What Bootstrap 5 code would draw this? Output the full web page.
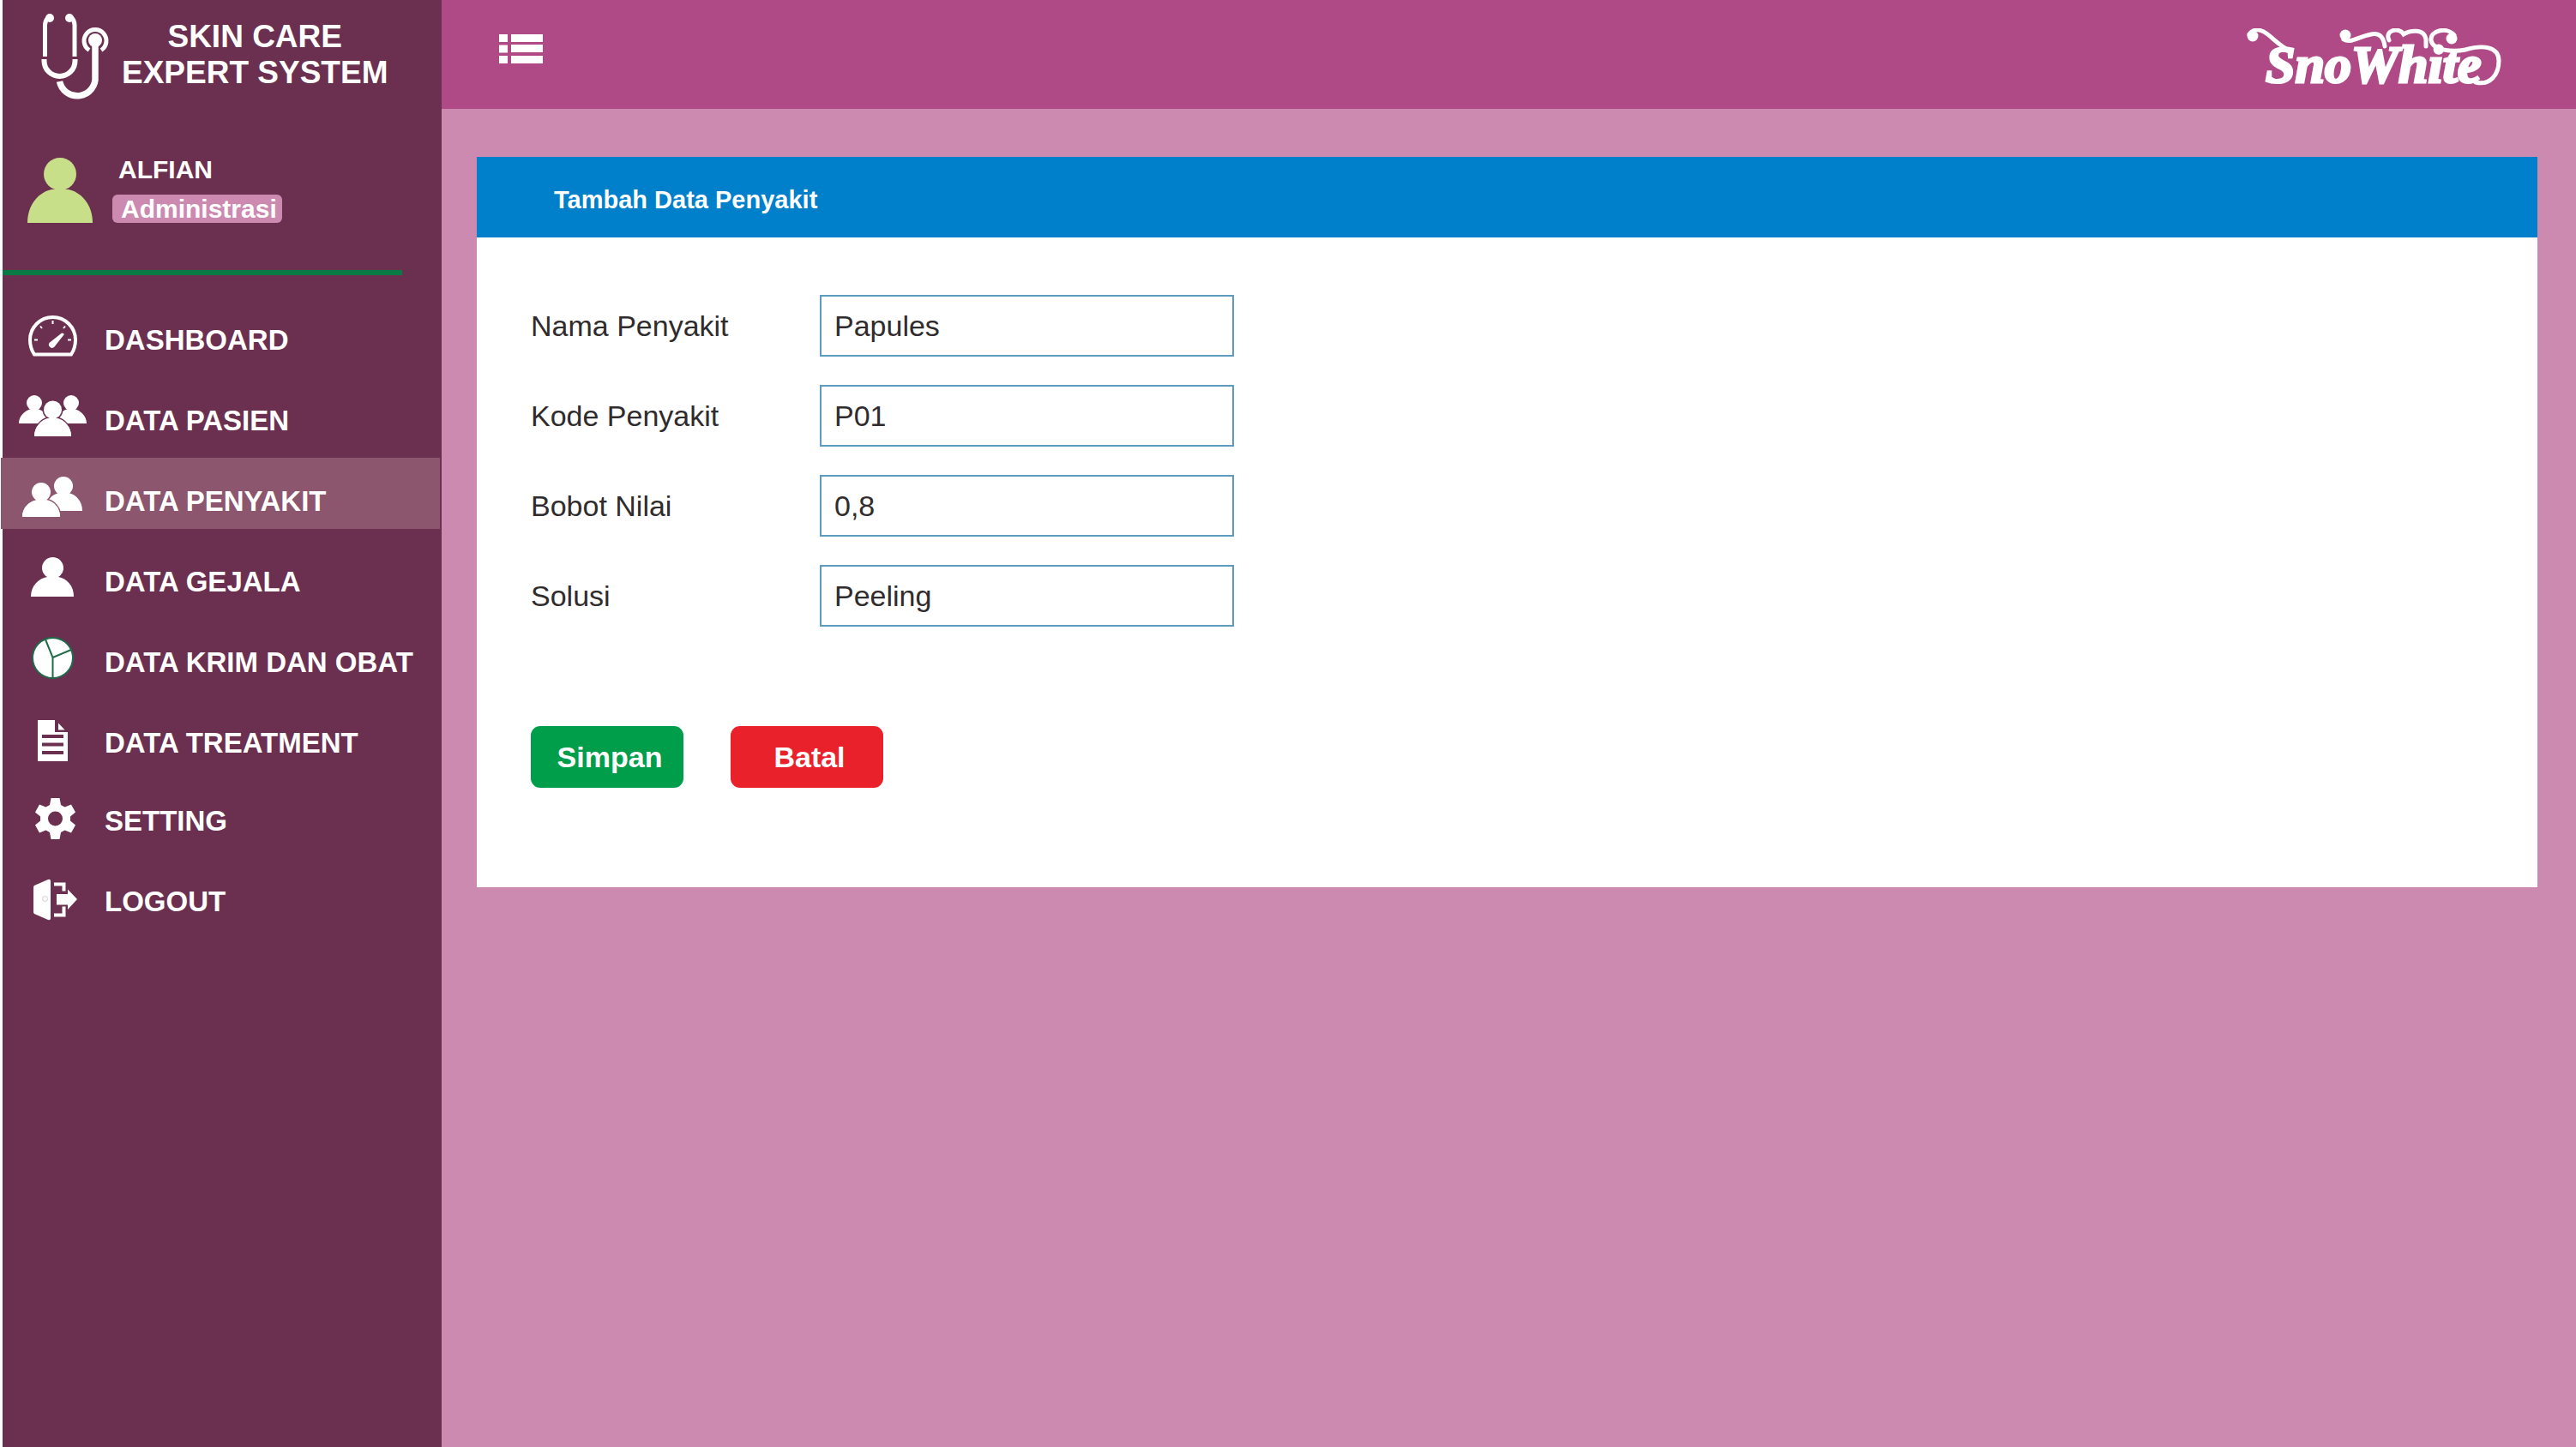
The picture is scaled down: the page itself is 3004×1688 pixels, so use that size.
<!DOCTYPE html>
<html lang="id">
<head>
<meta charset="utf-8">
<meta name="viewport" content="width=device-width, initial-scale=1">
<title>Skin Care Expert System - Tambah Data Penyakit</title>
<link href="https://cdn.jsdelivr.net/npm/bootstrap@5.3.0/dist/css/bootstrap.min.css" rel="stylesheet">
<style>
  body { font-family: "Liberation Sans", Arial, sans-serif; font-size: 34px; line-height: 40px; color: #302c2d; background: #cc8ab0; }
  a { text-decoration: none; }

  /* Sidebar */
  .sidebar { width: 515px; background: #6b2f50; border-left: 3px solid #fff; color: #fff; font-weight: 700; }
  .brand { height: 127px; padding: 15px 0 0 39px; gap: 14px; }
  .brand-icon { width: 86px; height: 104px; }
  .brand-title { font-size: 37px; line-height: 42px; padding-top: 7px; margin: 0; font-weight: 700; }
  .profile { padding: 57px 0 0 29px; gap: 23px; }
  .profile-text { font-size: 30px; line-height: 33px; }
  .profile-name { padding: 13px 0 0 7px; margin: -16px 0 13px; }
  .role-pill { background: #cc8ab0; border-radius: 6px; padding: 0 10px; width: 198px; }
  .divider { height: 6px; width: 466px; margin: 55px 0 25px; background: #0a7a45; border: 0; opacity: 1; }
  .menu { gap: 11px; margin-bottom: 8px; }
  .menu-link { height: 83px; color: #fff; font-size: 33px; padding: 19px 0 0 17px; gap: 18px; margin: 0 2px 0 -2px; border-left: 2px solid transparent; }
  .menu-link:hover { color: #fff; }
  .menu-link.active { background: #8b566e; border-color: #8b566e; }
  .menu-link span { padding-top: 12px; }
  .menu-link svg { width: 84px; height: 56px; fill: #fff; flex: none; }

  /* Top bar */
  .topbar { height: 127px; background: #af4a86; padding: 33px 86px 0 67px; }
  .toggle { border: 0; background: none; padding: 7px 0 0; line-height: 0; }
  .wordmark { font-family: "Liberation Serif", serif; font-size: 62px; font-weight: 700; font-style: italic; }

  /* Form card */
  .page-area { padding: 56px 45px 45px 41px; }
  .panel { background: #fff; }
  .panel-head { background: #007fcb; color: #fff; font-size: 29px; font-weight: 700; line-height: 40px; padding: 30px 90px 24px; margin: 0; }
  .panel-form { padding: 67px 63px 116px; }
  .field { margin-bottom: 33px; }
  .field label { width: 337px; }
  .field .form-control { width: 483px; height: 72px; border: 2px solid #5d9cbf; border-radius: 0; padding: 0 15px; font-size: 34px; line-height: 40px; color: #302c2d; background: #fff; }
  .actions { gap: 55px; padding-top: 83px; }
  .actions .btn { width: 178px; height: 72px; border: 0; border-radius: 11px; padding: 0 0 0 6px; font-size: 34px; line-height: 40px; font-weight: 700; color: #fff; }
  .btn-save { background: #009d4b; }
  .btn-cancel { background: #e8212b; }
</style>
</head>
<body>
<div class="d-flex min-vh-100">
  <aside class="sidebar flex-shrink-0">
    <div class="brand d-flex">
      <svg class="brand-icon flex-shrink-0" viewBox="0 0 86 104" fill="none" stroke="#fff" aria-hidden="true">
        <path d="M10.500 51V14q0-5 4-9M45 51V14q0-5-4-9" stroke-width="5"/>
        <g fill="#fff" stroke="none"><circle cx="16" cy="6" r="5"/><circle cx="39" cy="6" r="5"/></g>
        <path d="M9.500 54v2a18 18 0 0 0 36 0v-2" stroke-width="6"/>
        <path d="M27.500 80A21 21 0 0 0 69 74V32" stroke-width="7.500"/>
        <circle cx="69" cy="32" r="8" fill="#fff" stroke="none"/>
        <path d="M62 43.500a13 13 0 1 1 14 0" stroke-width="5"/>
      </svg>
      <h1 class="brand-title text-center">SKIN CARE<br>EXPERT SYSTEM</h1>
    </div>
    <div class="profile d-flex">
      <svg width="76" height="76" viewBox="0 0 76 76" fill="#c8df8a" aria-hidden="true"><circle cx="38" cy="19" r="19"/><path d="M0 76C0 54 14 40 28 37h20c14 3 28 17 28 39z"/></svg>
      <div class="profile-text">
        <div class="profile-name">ALFIAN</div>
        <div class="role-pill">Administrasi</div>
      </div>
    </div>
    <hr class="divider">
    <nav>
      <ul class="menu list-unstyled d-flex flex-column">
        <li><a class="menu-link d-flex" href="#"><svg viewBox="0 0 84 56" aria-hidden="true"><path d="M20 48.500h43c4-6 5-11 5-17a26.500 26.500 0 0 0-53 0c0 6 1 11 5 17z" fill="none" stroke="#fff" stroke-width="4"/><path d="M41.500 9v4M27 15.500l2 2.500M56 15.500l-2 2.500M20 31.500h4M59 31.500h4" stroke="#fff" stroke-width="2"/><path d="M52 23.500q3 0 2.500 2L43.500 39.500a3.500 3.500 0 0 1-5.500-5z"/></svg><span>DASHBOARD</span></a></li>
        <li><a class="menu-link d-flex" href="#"><svg viewBox="0 0 84 56" aria-hidden="true"><g><circle cx="20" cy="11" r="9"/><circle cx="63" cy="11" r="9"/><path d="M2 35c0-9 7-15 14-17h8c7 2 14 8 14 17zM45 35c0-9 7-15 14-17h8c7 2 14 8 14 17z"/></g><g stroke="#6b2f50" stroke-width="3" paint-order="stroke"><path d="M20 50c0-11 8-19 16-21h11c8 2 16 10 16 21z"/><circle cx="41.500" cy="19" r="10.500"/></g><path d="M20 50c0-11 8-19 16-21h11c8 2 16 10 16 21z"/></svg><span>DATA PASIEN</span></a></li>
        <li><a class="menu-link active d-flex" href="#" aria-current="page"><svg viewBox="0 0 84 56" aria-hidden="true"><circle cx="54" cy="14" r="11"/><path d="M32 43c0-11 8-19 17-21h11c9 2 16 10 16 21z"/><g stroke="#8b566e" stroke-width="3" paint-order="stroke"><path d="M6 50c0-11 8-18 17-20h11c9 2 16 9 16 20z"/><circle cx="28" cy="21" r="11"/></g><path d="M6 50c0-11 8-18 17-20h11c9 2 16 9 16 20z"/></svg><span>DATA PENYAKIT</span></a></li>
        <li><a class="menu-link d-flex" href="#"><svg viewBox="0 0 84 56" aria-hidden="true"><circle cx="41.500" cy="15.500" r="12.500"/><path d="M16 49c0-13 9-21 19-23h13c10 2 18 10 18 23z"/></svg><span>DATA GEJALA</span></a></li>
        <li><a class="menu-link d-flex" href="#"><svg viewBox="0 0 84 56" aria-hidden="true"><g stroke="#1d6b49" stroke-width="2"><circle cx="41.500" cy="26.500" r="23.500"/><path d="M41.500 50V26L33 5M41.500 26L63 17" fill="none"/></g></svg><span>DATA KRIM DAN OBAT</span></a></li>
        <li><a class="menu-link d-flex" href="#"><svg viewBox="0 0 84 56" aria-hidden="true"><path fill-rule="evenodd" d="M24 5h20v14h15v34H24zM29 22v4h25v-4zM29 31.500v4h25v-4zM29 41v4h25v-4z"/><path d="M48 8.500v8h7.500z"/></svg><span>DATA TREATMENT</span></a></li>
      </ul>
      <ul class="menu list-unstyled d-flex flex-column">
        <li><a class="menu-link d-flex" href="#"><svg viewBox="0 0 84 56" aria-hidden="true"><path fill-rule="evenodd" d="M39.500 5h10l1.500 8 4.500 2.500 7.500-3 5 9-6 5v5l6 5-5 9-7.500-3-4.500 2.500-1.500 8h-10l-1.500-8-4.500-2.500-7.500 3-5-9 6-5v-5l-6-5 5-9 7.500 3 4.500-2.500zM44.500 20.500a8.500 8.500 0 1 0 0 17a8.500 8.500 0 1 0 0-17z"/></svg><span>SETTING</span></a></li>
        <li><a class="menu-link d-flex" href="#"><svg viewBox="0 0 84 56" aria-hidden="true"><path d="M20 13l16-7q3-1 3 2v43q0 3-3 2l-16-7q-1-1-1-2V15q0-1 1-2z"/><path d="M43 11.500h11.500v8M43 47.500h11.500v-10" fill="none" stroke="#fff" stroke-width="4"/><path d="M46 23h13v-5.500l11 11.500-11 12v-5.500H46z"/><circle cx="32.500" cy="28.500" r="3" fill="none" stroke="#d9c8d2"/></svg><span>LOGOUT</span></a></li>
      </ul>
    </nav>
  </aside>

  <div class="flex-grow-1">
    <header class="topbar d-flex justify-content-between align-items-start">
      <button class="toggle" type="button" aria-label="Menu">
        <svg width="51" height="34" viewBox="0 0 51 34" fill="#fff"><path d="M0 0h10v9H0zM14 0h37v9H14zM0 12.500h10v9H0zM14 12h37v9H14zM0 25h10v9H0zM14 25h37v9H14z"/></svg>
      </button>
      <svg width="298" height="90" viewBox="0 0 298 90" fill="none" stroke="#fff" stroke-linecap="round" role="img" aria-label="SnoWhite">
        <text class="wordmark" x="22" y="63" fill="#fff" stroke-width="3">SnoWhite</text>
        <!-- swashes around the name -->
        <g fill="#fff" stroke="none"><circle cx="7" cy="9" r="6.500"/><circle cx="115" cy="8" r="6.500"/><circle cx="239" cy="12" r="6.500"/></g>
        <path d="M3 7C8 0 16 1 23 6S36 18 46 24M113 13c8 5 17-3 32-6q14-3 16 14" stroke-width="5"/>
        <path d="M166 14c-6-12 12-16 17-7 6-4 24-8 26 6v8" stroke-width="5"/>
        <path d="M242 8C234-2 214 2 215 14c2 12 25 14 40 11 20-6 39-4 39 13 0 16-10 29-27 25" stroke-width="5"/>
      </svg>
    </header>

    <main class="page-area">
      <section class="panel">
        <h2 class="panel-head">Tambah Data Penyakit</h2>
        <form class="panel-form">
          <div class="field d-flex align-items-center"><label for="nama">Nama Penyakit</label><input class="form-control" id="nama" type="text" value="Papules"></div>
          <div class="field d-flex align-items-center"><label for="kode">Kode Penyakit</label><input class="form-control" id="kode" type="text" value="P01"></div>
          <div class="field d-flex align-items-center"><label for="bobot">Bobot Nilai</label><input class="form-control" id="bobot" type="text" value="0,8"></div>
          <div class="field d-flex align-items-center"><label for="solusi">Solusi</label><input class="form-control" id="solusi" type="text" value="Peeling"></div>
          <div class="actions d-flex">
            <button class="btn btn-save" type="submit">Simpan</button>
            <button class="btn btn-cancel" type="button">Batal</button>
          </div>
        </form>
      </section>
    </main>
  </div>
</div>
<script src="https://cdn.jsdelivr.net/npm/bootstrap@5.3.0/dist/js/bootstrap.bundle.min.js"></script>
</body>
</html>
